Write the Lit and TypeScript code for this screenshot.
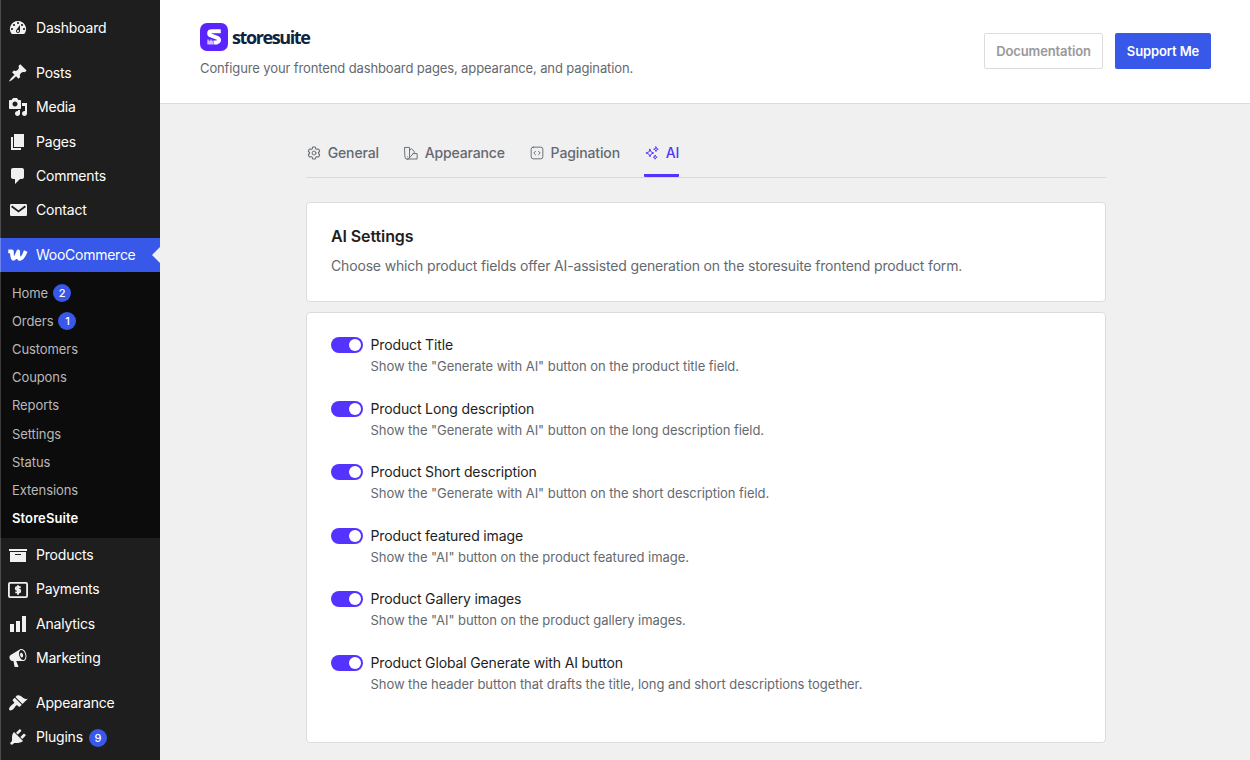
import { LitElement, html, css, svg } from "lit";
import { customElement, property } from "lit/decorators.js";
import { classMap } from "lit/directives/class-map.js";

interface MenuItem {
  label: string;
  icon: string;
  badge?: string;
  active?: boolean;
  gap?: boolean;
}

const glyphs: Record<string, unknown> = {
  dashboard: svg`<path fill-rule="evenodd" d="M3.76 16h12.48A7.998 7.998 0 0 0 10 3a7.998 7.998 0 0 0-6.24 13zM10 4c.55 0 1 .45 1 1s-.45 1-1 1-1-.45-1-1 .45-1 1-1zM6 6c.55 0 1 .45 1 1s-.45 1-1 1-1-.45-1-1 .45-1 1-1zm8 0c.55 0 1 .45 1 1s-.45 1-1 1-1-.45-1-1 .45-1 1-1zm-5.37 5.55L12 7v6c0 1.1-.9 2-2 2s-2-.9-2-2c0-.57.24-1.08.63-1.45zM4 10c.55 0 1 .45 1 1s-.45 1-1 1-1-.45-1-1 .45-1 1-1zm12 0c.55 0 1 .45 1 1s-.45 1-1 1-1-.45-1-1 .45-1 1-1zm-5 3c0-.55-.45-1-1-1s-1 .45-1 1 .45 1 1 1 1-.45 1-1z"/>`,
  posts: svg`<path d="M10.44 3.02l1.82-1.82 6.36 6.35-1.83 1.82c-1.05-.68-2.48-.57-3.41.36l-.75.75c-.92.93-1.04 2.35-.35 3.41l-1.83 1.82-2.41-2.41-2.8 2.79c-.42.42-3.38 2.71-3.8 2.29s1.86-3.39 2.28-3.81l2.79-2.79L4.1 9.36l1.83-1.82c1.05.69 2.48.57 3.4-.36l.75-.75c.93-.92 1.05-2.35.36-3.41z"/>`,
  media: svg`<path fill-rule="evenodd" d="M13 11V4c0-.55-.45-1-1-1h-1.67L9 1H5L3.67 3H2c-.55 0-1 .45-1 1v7c0 .55.45 1 1 1h10c.55 0 1-.45 1-1zM7 4.5c1.38 0 2.5 1.12 2.5 2.5S8.38 9.5 7 9.5 4.5 8.38 4.5 7 5.62 4.5 7 4.5zM14 6h5v10.5c0 1.38-1.12 2.5-2.5 2.5S14 17.88 14 16.5s1.12-2.5 2.5-2.5c.17 0 .34.02.5.05V9h-3V6zm-4 8.05V13h2v3.5c0 1.38-1.12 2.5-2.5 2.5S7 17.88 7 16.5 8.12 14 9.5 14c.17 0 .34.02.5.05z"/>`,
  pages: svg`<path d="M6 15V2h10v13H6zm-1 1h8v2H3V5h2v11z"/>`,
  comments: svg`<path d="M5 2h9c1.1 0 2 .9 2 2v7c0 1.1-.9 2-2 2h-2l-5 5v-5H5c-1.1 0-2-.9-2-2V4c0-1.1.9-2 2-2z"/>`,
  contact: svg`<rect x="2" y="4" width="17" height="12" rx="1.2"/><path d="M3.6 6.2l6.9 5.2 6.9-5.2" fill="none" stroke="#1e1e1e" stroke-width="1.9"/>`,
  woo: svg`<path d="M.3 6.300H3.900Q3.900 13.900 5.400 13.900Q7.200 13.900 10.300 6.400Q9.900 13.900 11.900 13.900Q14.800 13.900 17.700 6" fill="none" stroke="currentColor" stroke-width="3.700" stroke-linejoin="round"/>`,
  products: svg`<path fill-rule="evenodd" d="M19 4v2H1V4h18zM2 7h16v10H2V7zm11 3V9H7v1h6z"/>`,
  payments: svg`<rect x=".9" y="2.900" width="18.200" height="14.200" rx="1.100" fill="none" stroke="currentColor" stroke-width="1.800"/><path d="M12.700 7.300H8.700q-.9 0-.9 1.200t.9 1.300h2.600q.9 0 .9 1.300t-.9 1.300H7.300M10 5.200v9.600" fill="none" stroke="currentColor" stroke-width="1.900"/>`,
  analytics: svg`<path d="M18 18V2h-4v16h4zm-6 0V7H8v11h4zm-6 0v-8H2v8h4z"/>`,
  marketing: svg`<path fill-rule="evenodd" d="M18.150 5.940c.46 1.620.38 3.220-.02 4.480-.42 1.280-1.260 2.180-2.300 2.480-.16.060-.26.060-.4.060-.06.020-.12.020-.18.020-.06.020-.14.020-.22.020h-6.800l2.220 5.500c.02.140-.06.260-.14.340-.08.100-.24.160-.34.160H6.950c-.1 0-.26-.06-.34-.16-.08-.08-.16-.2-.14-.34l-1-5.500H4.250l-.02-.02c-.5.060-1.080-.18-1.540-.62s-.88-1.080-1.060-1.880c-.24-.8-.2-1.560-.02-2.200.18-.62.580-1.080 1.060-1.300l.02-.02 9-5.400c.1-.06.180-.1.240-.16.060-.04.140-.08.240-.12.160-.08.280-.12.500-.18 1.040-.3 2.240.1 3.220.98s1.840 2.240 2.260 3.860zm-2.580 5.980h-.02c.4-.1.740-.34 1.040-.7.580-.7.860-1.760.86-3.040 0-.64-.1-1.300-.28-1.980-.34-1.360-1.020-2.500-1.780-3.240s-1.680-1.100-2.460-.88c-.82.220-1.400.96-1.700 2-.32 1.040-.28 2.360.06 3.720.38 1.360 1 2.500 1.800 3.240.78.740 1.620 1.100 2.480.88zm-2.540-7.080c.22-.04.420-.02.620.040.38.160.76.480 1.020 1s.42 1.200.42 1.780c0 .3-.04.560-.12.800-.18.480-.44.840-.86.940-.34.100-.8-.06-1.140-.4s-.64-.86-.78-1.500c-.18-.62-.12-1.240.02-1.720s.48-.84.820-.94z"/>`,
  appearance: svg`<path d="M14.480 11.060L7.410 3.990l1.500-1.500c.5-.56 2.300-.47 3.510.32 1.210.8 1.430 1.280 2.910 2.100 1.180.64 2.450 1.260 4.450.85zm-.71.71L6.700 4.700 4.930 6.470c-.39.39-.39 1.020 0 1.410l1.060 1.060c.39.39.39 1.030 0 1.420-.6.600-1.430 1.110-2.210 1.690-.35.260-.7.530-1.010.84C1.430 14.230.4 16.080 1.400 17.070c.99 1 2.840-.03 4.180-1.360.31-.31.580-.66.850-1.020.57-.78 1.080-1.610 1.690-2.210.39-.39 1.020-.39 1.410 0l1.060 1.060c.39.39 1.020.39 1.410 0z"/>`,
  plugins: svg`<path d="M13.110 4.360L9.870 7.600 8 5.730l3.240-3.240c.35-.34 1.050-.2 1.560.32.520.51.660 1.210.31 1.550zm-8 1.770l.91-1.120 9.010 9.010-1.190.84c-.71.710-2.630 1.160-3.820 1.160H6.140L4.900 17.260c-.59.590-1.540.59-2.120 0-.59-.58-.59-1.530 0-2.120l1.240-1.240v-3.880c0-1.130.4-3.190 1.090-3.890zm7.260 3.970l3.240-3.240c.34-.35 1.040-.21 1.550.31.520.51.660 1.210.31 1.550l-3.240 3.250z"/>`,
};

const tabGlyphs: Record<string, unknown> = {
  General: svg`<path transform="translate(-1.500 -1.500) scale(1.125)" d="M9.600 3.940c.09-.54.560-.94 1.110-.94h2.590c.55 0 1.020.4 1.110.94l.213 1.281c.063.374.313.686.645.870.074.04.147.083.220.127.325.196.720.257 1.075.124l1.217-.456a1.125 1.125 0 0 1 1.370.490l1.296 2.247a1.125 1.125 0 0 1-.260 1.431l-1.003.827c-.293.241-.438.613-.430.992a7.723 7.723 0 0 1 0 .255c-.008.378.137.750.430.991l1.004.827c.424.350.534.955.260 1.430l-1.298 2.247a1.125 1.125 0 0 1-1.369.491l-1.217-.456c-.355-.133-.750-.072-1.076.124a6.470 6.470 0 0 1-.220.128c-.331.183-.581.495-.644.869l-.213 1.281c-.090.543-.560.940-1.110.940h-2.594c-.550 0-1.019-.398-1.110-.940l-.213-1.281c-.062-.374-.312-.686-.644-.870a6.520 6.520 0 0 1-.220-.127c-.325-.196-.720-.257-1.076-.124l-1.217.456a1.125 1.125 0 0 1-1.369-.490l-1.297-2.247a1.125 1.125 0 0 1 .260-1.431l1.004-.827c.292-.240.437-.613.430-.991a6.932 6.932 0 0 1 0-.255c.007-.380-.138-.751-.430-.992l-1.004-.827a1.125 1.125 0 0 1-.260-1.430l1.297-2.247a1.125 1.125 0 0 1 1.370-.491l1.216.456c.356.133.751.072 1.076-.124.072-.044.146-.086.220-.128.332-.183.582-.495.644-.869z"/><circle cx="12" cy="12" r="3.300"/>`,
  Appearance: svg`<path d="M1.500 2.500h8v16.200a4 4 0 0 1-8 0zM9.500 7.500l3.500-3 5.200 6-8.700 9.500M15.500 13h7v9.300H5.500M5.500 18.500h.1"/>`,
  Pagination: svg`<rect x="2" y="2" width="20" height="20" rx="3.500"/><path d="M9.500 9l-3 3 3 3M14.500 9l3 3-3 3"/>`,
  AI: svg`<path d="M8.500 5.500l1.900 4.600 4.600 1.900-4.600 1.900-1.900 4.600-1.900-4.600L1.500 12l5.100-1.900zM18.800 1.500l1.100 2.900 2.900 1.100-2.900 1.100-1.100 2.900-1.100-2.900-2.900-1.100 2.900-1.100zM17.500 16l1 2.300 2.300 1-2.300 1-1 2.300-1-2.300-2.300-1 2.300-1z"/>`,
};

@customElement("admin-menu")
class AdminMenu extends LitElement {
  private top: MenuItem[] = [
    { label: "Dashboard", icon: "dashboard" },
    { label: "Posts", icon: "posts", gap: true },
    { label: "Media", icon: "media" },
    { label: "Pages", icon: "pages" },
    { label: "Comments", icon: "comments" },
    { label: "Contact", icon: "contact" },
    { label: "WooCommerce", icon: "woo", active: true, gap: true },
  ];
  private sub: { label: string; badge?: string; current?: boolean }[] = [
    { label: "Home", badge: "2" },
    { label: "Orders", badge: "1" },
    { label: "Customers" },
    { label: "Coupons" },
    { label: "Reports" },
    { label: "Settings" },
    { label: "Status" },
    { label: "Extensions" },
    { label: "StoreSuite", current: true },
  ];
  private bottom: MenuItem[] = [
    { label: "Products", icon: "products" },
    { label: "Payments", icon: "payments" },
    { label: "Analytics", icon: "analytics" },
    { label: "Marketing", icon: "marketing" },
    { label: "Appearance", icon: "appearance", gap: true },
    { label: "Plugins", icon: "plugins", badge: "9" },
  ];

  static styles = css`
    :host { display: block; box-sizing: border-box; width: 160px; height: 760px; padding-top: 11px; overflow: hidden; background: #1e1e1e; box-shadow: inset 1px 0 #4b4b4b; }
    .item { display: flex; align-items: center; gap: 8px; height: 34.250px; padding-left: 8px; color: #fff; font-size: 14px; letter-spacing: -.2px; }
    .gap { margin-top: 10.700px; }
    .text { padding-bottom: 1.100px; }
    .icon { width: 20px; height: 20px; flex: none; color: #f0f0f1; fill: currentColor; }
    .active { background: #3858e9; box-shadow: inset 1px 0 #6c83ee; letter-spacing: -.26px; }
    .active .icon { color: #fff; }
    .arrow { margin-left: auto; border: 8px solid transparent; border-left: 0; border-right-color: #f0f0f0; }
    .sub { box-sizing: border-box; height: 266px; padding-top: 7px; background: #0c0c0c; box-shadow: inset 1px 0 #3c3c3c; }
    .link { display: flex; align-items: center; gap: 5px; height: 28.200px; padding-left: 12px; color: #b9b9b9; font-size: 13px; letter-spacing: -.08px; }
    .current { color: #fff; font-weight: 600; letter-spacing: .1px; }
    .badge { display: flex; align-items: center; justify-content: center; width: 18px; height: 18px; border-radius: 50%; background: #3858e9; color: #fff; font-size: 11px; font-weight: 500; letter-spacing: 0; }
    .item .badge { margin-left: -2px; margin-top: 1px; }
  `;

  private row(i: MenuItem) {
    return html`<div class=${classMap({ item: true, gap: !!i.gap, active: !!i.active })}>
      <svg class="icon" viewBox="0 0 20 20">${glyphs[i.icon]}</svg><span class="text">${i.label}</span>
      ${i.badge ? html`<span class="badge">${i.badge}</span>` : ""}
      ${i.active ? html`<span class="arrow"></span>` : ""}
    </div>`;
  }

  render() {
    return html`
      ${this.top.map((i) => this.row(i))}
      <div class="sub">
        ${this.sub.map((s) => html`<div class=${classMap({ link: true, current: !!s.current })}>
          <span class="text">${s.label}</span>${s.badge ? html`<span class="badge">${s.badge}</span>` : ""}
        </div>`)}
      </div>
      ${this.bottom.map((i) => this.row(i))}
    `;
  }
}

@customElement("toggle-row")
class ToggleRow extends LitElement {
  @property() label = "";
  @property() note = "";

  static styles = css`
    :host { display: flex; gap: 7.500px; height: 63.600px; }
    .switch { box-sizing: border-box; flex: none; display: flex; justify-content: flex-end; width: 32px; height: 16px; margin-top: 2px; padding: 2px; border-radius: 8px; background: #5433ff; }
    .knob { width: 12px; height: 12px; border-radius: 50%; background: #fff; }
    .label { font-size: 14px; line-height: 20px; letter-spacing: -.14px; color: #1e1e1e; }
    .note { margin-top: 1px; font-size: 13px; line-height: 20px; letter-spacing: -.055px; color: #646970; }
  `;

  render() {
    return html`<div class="switch"><div class="knob"></div></div>
      <div><div class="label">${this.label}</div><div class="note">${this.note}</div></div>`;
  }
}

@customElement("app-root")
class AppRoot extends LitElement {
  private rows = [
    ["Product Title", 'Show the "Generate with AI" button on the product title field.'],
    ["Product Long description", 'Show the "Generate with AI" button on the long description field.'],
    ["Product Short description", 'Show the "Generate with AI" button on the short description field.'],
    ["Product featured image", 'Show the "AI" button on the product featured image.'],
    ["Product Gallery images", 'Show the "AI" button on the product gallery images.'],
    ["Product Global Generate with AI button", "Show the header button that drafts the title, long and short descriptions together."],
  ];

  static styles = css`
    :host { display: flex; width: 1250px; height: 760px; overflow: hidden; background: #f0f0f0; font-family: Inter, "Liberation Sans", sans-serif; white-space: nowrap; }
    .main { flex: 1; }
    .header { box-sizing: border-box; display: flex; justify-content: space-between; height: 104px; padding: 23px 39px 0 40px; border-bottom: 1px solid #dcdcdc; background: #fff; }
    .brand { display: flex; align-items: center; gap: 4px; height: 28px; }
    .mark { width: 28px; height: 28px; }
    .name { font-family: "Open Sans", sans-serif; font-weight: 700; font-size: 18px; letter-spacing: -1.400px; color: #10233f; }
    .tagline { margin-top: 7px; font-size: 13px; line-height: 20px; letter-spacing: -.12px; color: #646970; }
    .actions { display: flex; gap: 12px; padding-top: 10px; }
    .btn { box-sizing: border-box; display: flex; align-items: center; justify-content: center; height: 36px; border-radius: 2px; font-size: 13px; font-weight: 600; letter-spacing: -.12px; }
    .ghost { width: 119px; border: 1px solid #dcdcdc; color: #999; }
    .solid { width: 96px; background: #3858e9; color: #fff; }
    .body { width: 800px; margin-left: 146px; }
    .tabs { box-sizing: border-box; display: flex; gap: 24px; height: 74px; padding-top: 36px; border-bottom: 1px solid #d9d9d9; }
    .tab { box-sizing: border-box; display: flex; gap: 6.700px; height: 37px; padding-left: 1px; border-bottom: 3px solid transparent; color: #646970; font-size: 14px; line-height: 26px; font-weight: 500; letter-spacing: -.13px; }
    .on { color: #5433ff; border-bottom-color: #5433ff; border-radius: 1px; }
    .ticon { width: 14px; height: 14px; margin-top: 6px; fill: none; stroke: currentColor; stroke-width: 1.600; stroke-linejoin: round; stroke-linecap: round; }
    .card { box-sizing: border-box; border: 1px solid #dcdcdc; border-radius: 4px; background: #fff; padding: 0 24px; }
    .intro { height: 100px; margin-top: 24px; padding-top: 21px; }
    .title { font-size: 16px; line-height: 24px; font-weight: 600; letter-spacing: -.1px; color: #1e1e1e; }
    .desc { margin-top: 8px; font-size: 14px; line-height: 20px; letter-spacing: -.165px; color: #646970; }
    .fields { height: 431px; margin-top: 10px; padding-top: 22px; }
  `;

  private tab(name: string) {
    return html`<div class=${classMap({ tab: true, on: name === "AI" })}>
      <svg class="ticon" viewBox="0 0 24 24">${tabGlyphs[name]}</svg><span>${name}</span>
    </div>`;
  }

  render() {
    return html`
      <admin-menu></admin-menu>
      <div class="main">
        <div class="header">
          <div>
            <div class="brand">
              <svg class="mark" viewBox="0 0 28 28">
                <rect width="28" height="28" rx="7" fill="#5a24ff"/>
                <path d="M20.800 8.300H11.700Q9.200 8.300 9.200 10.300T11.400 12.600L16.800 14.600Q19 15.400 19 17T16.800 19.400H13.500" fill="none" stroke="#fff" stroke-width="4"/>
                <path d="M7.300 16.500h1.500v1.300h1.500v-1.300h1.500v1.300H13v3.600H7.300z" fill="#cfc0ff"/>
              </svg>
              <span class="name">storesuite</span>
            </div>
            <div class="tagline">Configure your frontend dashboard pages, appearance, and pagination.</div>
          </div>
          <div class="actions">
            <div class="btn ghost">Documentation</div>
            <div class="btn solid">Support Me</div>
          </div>
        </div>
        <div class="body">
          <div class="tabs">${["General", "Appearance", "Pagination", "AI"].map((t) => this.tab(t))}</div>
          <div class="card intro">
            <div class="title">AI Settings</div>
            <div class="desc">Choose which product fields offer AI-assisted generation on the storesuite frontend product form.</div>
          </div>
          <div class="card fields">
            ${this.rows.map(([l, n]) => html`<toggle-row .label=${l} .note=${n}></toggle-row>`)}
          </div>
        </div>
      </div>
    `;
  }
}
